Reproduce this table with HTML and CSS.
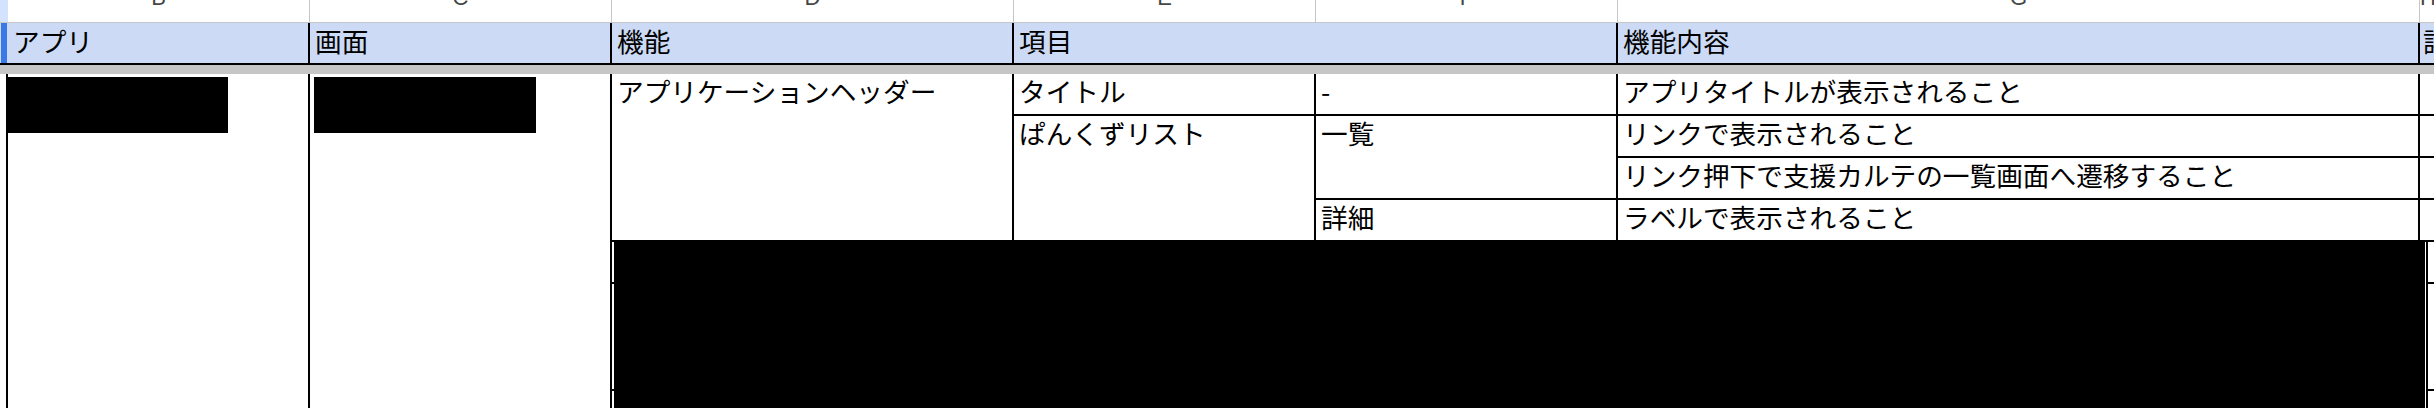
FILE: index.html
```html
<!DOCTYPE html>
<html lang="ja">
<head>
<meta charset="utf-8">
<title>Sheet</title>
<link rel="stylesheet" href="styles.css">
</head>
<body>
<div class="sheet">
  <div class="grid letters">
    <div class="lt lt-a"></div>
    <div class="lt"><span>B</span></div>
    <div class="lt"><span>C</span></div>
    <div class="lt"><span>D</span></div>
    <div class="lt"><span>E</span></div>
    <div class="lt"><span>F</span></div>
    <div class="lt"><span>G</span></div>
    <div class="lt lt-h"><span>H</span></div>
  </div>
  <div class="grid header">
    <div class="hc hc-a"><span class="selbar"></span></div>
    <div class="hc">アプリ</div>
    <div class="hc">画面</div>
    <div class="hc">機能</div>
    <div class="hc hc-span">項目</div>
    <div class="hc">機能内容</div>
    <div class="hc hc-h">詳細</div>
  </div>
  <div class="freeze"></div>
  <div class="grid body">
    <div class="c col-a"></div>
    <div class="c col-b br"><div class="blk blk-b"></div></div>
    <div class="c col-c br"><div class="blk blk-c"></div></div>
    <div class="c d1 br bb">アプリケーションヘッダー</div>
    <div class="c e1 br bb">タイトル</div>
    <div class="c f1 br bb">-</div>
    <div class="c g1 br bb">アプリタイトルが表示されること</div>
    <div class="c h1 bb"></div>
    <div class="c e2 br bb">ぱんくずリスト</div>
    <div class="c f2 br bb">一覧</div>
    <div class="c g2 br bb">リンクで表示されること</div>
    <div class="c h2 bb"></div>
    <div class="c g3 br bb">リンク押下で支援カルテの一覧画面へ遷移すること</div>
    <div class="c h3 bb"></div>
    <div class="c f4 br bb">詳細</div>
    <div class="c g4 br bb">ラベルで表示されること</div>
    <div class="c h4 bb"></div>
    <div class="c r5 bb"></div>
    <div class="c r6 bb"></div>
    <div class="redact"></div>
    <div class="c h5 hx bb"></div>
    <div class="c h6 hx bb"></div>
    <div class="c h7 hx"></div>
  </div>
</div>
</body>
</html>
```

FILE: styles.css
```css
* {
  box-sizing: border-box;
  margin: 0;
  padding: 0;
}

body {
  margin: 0;
  width: 2434px;
  height: 408px;
  overflow: hidden;
  background: #ffffff;
  color: #000000;
  font-family: "Noto Sans CJK JP", "Liberation Sans", sans-serif;
}

.sheet {
  width: 2434px;
}

.grid {
  display: grid;
  grid-template-columns: 8px 302px 302px 402px 302px 302px 802px 1fr;
}

/* column letter row (scrolled, only bottoms visible) */
.letters {
  height: 23px;
  border-bottom: 1px solid #c4c7c5;
  overflow: hidden;
}

.lt {
  border-right: 1px solid #c4c7c5;
  text-align: center;
  font-family: "Liberation Sans", Arial, sans-serif;
  font-size: 22px;
  line-height: 22px;
  color: #444746;
  overflow: hidden;
}

.lt span {
  display: block;
  margin-top: -13px;
}

.lt-a {
  background: #d3e3fd;
  border-right: none;
}

.lt-h {
  border-right: none;
}

/* header row */
.header {
  height: 42px;
  background: #ccdaf5;
  border-bottom: 2px solid #000000;
}

.hc {
  border-right: 2px solid #000000;
  padding: 1px 5px 0;
  font-size: 26.67px;
  line-height: 34px;
  white-space: nowrap;
  overflow: hidden;
}

.hc-a {
  border-right: none;
  padding: 0 1px;
}

.selbar {
  display: block;
  width: 6px;
  height: 100%;
  background: #3b78e7;
}

.hc-span {
  grid-column: span 2;
}

.hc-h {
  border-right: none;
  padding-left: 3px;
}

/* frozen pane divider */
.freeze {
  height: 9px;
  background: #c6c6c6;
}

/* body */
.body {
  height: 334px;
  grid-template-rows: 42px 42px 42px 42px 42px 107px 1fr;
}

.c {
  font-size: 26.67px;
  line-height: 34px;
  padding: 0 5px;
  white-space: nowrap;
  overflow: hidden;
}

.br {
  border-right: 2px solid #000000;
}

.bb {
  border-bottom: 2px solid #000000;
}

.col-a {
  grid-column: 1;
  grid-row: 1 / 8;
  border-right: 2px solid #000000;
  padding: 0;
}

.col-b {
  grid-column: 2;
  grid-row: 1 / 8;
  padding: 0;
}

.col-c {
  grid-column: 3;
  grid-row: 1 / 8;
  padding: 0;
}

.blk {
  height: 56px;
  margin-top: 3px;
  background: #000000;
}

.blk-b {
  width: 220px;
}

.blk-c {
  width: 222px;
  margin-left: 4px;
}

.d1 { grid-column: 4; grid-row: 1 / 5; }
.e1 { grid-column: 5; grid-row: 1; }
.f1 { grid-column: 6; grid-row: 1; }
.g1 { grid-column: 7; grid-row: 1; }
.h1 { grid-column: 8; grid-row: 1; }
.e2 { grid-column: 5; grid-row: 2 / 5; }
.f2 { grid-column: 6; grid-row: 2 / 4; }
.g2 { grid-column: 7; grid-row: 2; }
.h2 { grid-column: 8; grid-row: 2; }
.g3 { grid-column: 7; grid-row: 3; }
.h3 { grid-column: 8; grid-row: 3; }
.f4 { grid-column: 6; grid-row: 4; }
.g4 { grid-column: 7; grid-row: 4; }
.h4 { grid-column: 8; grid-row: 4; }
.r5 { grid-column: 4 / 8; grid-row: 5; }
.r6 { grid-column: 4 / 8; grid-row: 6; }

.redact {
  grid-column: 4 / 8;
  grid-row: 5 / 8;
  margin: 0 -5px 0 2px;
  background: #000000;
}

.h5 { grid-column: 8; grid-row: 5; }
.h6 { grid-column: 8; grid-row: 6; }
.h7 { grid-column: 8; grid-row: 7; }

.hx {
  margin-left: 6px;
  border-left: 2px solid #000000;
}
```
